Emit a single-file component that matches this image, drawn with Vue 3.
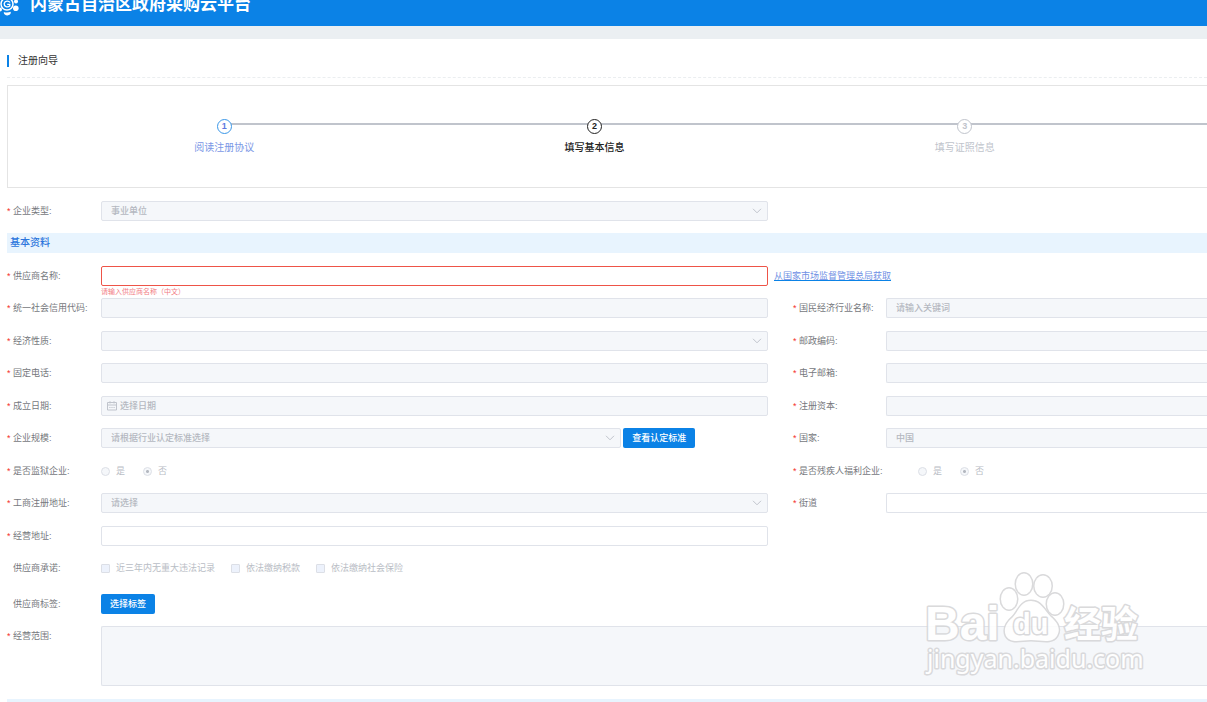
<script setup>
const steps = [
  { n: 1, title: '阅读注册协议', state: 'done' },
  { n: 2, title: '填写基本信息', state: 'current' },
  { n: 3, title: '填写证照信息', state: 'waiting' }
]

const rows = [
  { left: { id: 'credit', label: '统一社会信用代码:' }, right: { id: 'industry', label: '国民经济行业名称:', hint: '请输入关键词' } },
  { left: { id: 'nature', label: '经济性质:', kind: 'select', hint: '' }, right: { id: 'zip', label: '邮政编码:' } },
  { left: { id: 'phone', label: '固定电话:' }, right: { id: 'email', label: '电子邮箱:' } },
  { left: { id: 'founded', label: '成立日期:', kind: 'date', hint: '选择日期' }, right: { id: 'capital', label: '注册资本:' } },
  { left: { id: 'scale', label: '企业规模:', kind: 'select', hint: '请根据行业认定标准选择', button: '查看认定标准' }, right: { id: 'country', label: '国家:', hint: '中国' } },
  { left: { id: 'prison', label: '是否监狱企业:', kind: 'radio' }, right: { id: 'welfare', label: '是否残疾人福利企业:', kind: 'radio', wide: true } },
  { left: { id: 'region', label: '工商注册地址:', kind: 'select', hint: '请选择' }, right: { id: 'street', label: '街道', open: true } },
  { left: { id: 'address', label: '经营地址:', open: true } }
]

const promises = ['近三年内无重大违法记录', '依法缴纳税款', '依法缴纳社会保险']
</script>

<template>
  <div class="page">
    <header class="top">
      <svg class="logo" width="20" height="16" viewBox="0 0 20 16" fill="none" aria-hidden="true">
        <circle cx="7" cy="4" r="6" stroke="#fff" stroke-width="1.5" />
        <path d="M10 2.500C9 .5 5 .3 4.200 3.500C3.800 6.500 7.500 8 9.800 6V4.300H7.200" stroke="#fff" stroke-width="1.300" />
        <circle cx="16" cy="1.500" r="2" fill="#fff" />
        <circle cx="15.800" cy="8.300" r="2.800" fill="#fff" />
        <path d="M3.800 12C5.500 12.800 8.800 12.800 10.600 11.800C11.500 13.500 9.500 15.500 7.400 15.500C5.500 15.500 3.500 14 3.800 12Z" fill="#fff" />
        <circle cx="0" cy="9.500" r="2" fill="#fff" />
      </svg>
      <h1>内蒙古自治区政府采购云平台</h1>
    </header>
    <div class="strip"></div>

    <main>
      <h2 class="guide"><span>注册向导</span></h2>

      <ol class="steps">
        <li v-for="s in steps" :key="s.n" :class="s.state">
          <span class="num">{{ s.n }}</span>
          <span class="title">{{ s.title }}</span>
        </li>
        <li class="tail" aria-hidden="true"></li>
      </ol>

      <form @submit.prevent>
        <div class="row type">
          <div class="item">
            <label for="type"><i>*</i>企业类型:</label>
            <div class="select">
              <select id="type" disabled><option>事业单位</option></select>
              <svg width="10" height="6" viewBox="0 0 10 6"><path d="M1 .8L5 4.800L9 .8" /></svg>
            </div>
          </div>
        </div>

        <h3>基本资料</h3>

        <div class="row supplier">
          <div class="item">
            <label for="name"><i>*</i>供应商名称:</label>
            <input id="name" type="text" class="invalid" />
          </div>
          <a href="#">从国家市场监督管理总局获取</a>
        </div>
        <p class="error">请输入供应商名称（中文）</p>

        <div v-for="(r, k) in rows" :key="k" class="row line">
          <div
            v-for="(f, side) in r"
            :key="f.id"
            class="item"
            :class="[side, { wide: f.wide }]"
          >
            <label :for="f.kind === 'radio' ? f.id + '-yes' : f.id"><i>*</i>{{ f.label }}</label>
            <div v-if="f.kind === 'select'" class="combo" :class="{ paired: f.button }">
              <div class="select">
                <select :id="f.id" disabled><option>{{ f.hint }}</option></select>
                <svg width="10" height="6" viewBox="0 0 10 6"><path d="M1 .8L5 4.800L9 .8" /></svg>
              </div>
              <button v-if="f.button" type="button">{{ f.button }}</button>
            </div>
            <div v-else-if="f.kind === 'radio'" class="choices radios">
              <label><input :id="f.id + '-yes'" type="radio" :name="f.id" disabled />是</label>
              <label><input type="radio" :name="f.id" checked disabled />否</label>
            </div>
            <div v-else-if="f.kind === 'date'" class="date">
              <svg width="10" height="10" viewBox="0 0 10 10">
                <path d="M.5 1.500H9.500V9H.5ZM.5 4H9.500M3 .2V2.500M7 .2V2.500M2.300 6.500H3.500M4.400 6.500H5.600M6.500 6.500H7.700" />
              </svg>
              <input :id="f.id" type="text" :placeholder="f.hint" disabled />
            </div>
            <input v-else :id="f.id" type="text" :placeholder="f.hint" :disabled="!f.open" />
          </div>
        </div>

        <div class="item promise">
          <span class="name">供应商承诺:</span>
          <div class="choices">
            <label v-for="p in promises" :key="p"><input type="checkbox" disabled />{{ p }}</label>
          </div>
        </div>
        <div class="item tags">
          <span class="name">供应商标签:</span>
          <button type="button">选择标签</button>
        </div>
        <div class="item scope">
          <label for="scope"><i>*</i>经营范围:</label>
          <textarea id="scope" disabled></textarea>
        </div>
        <div class="next"></div>
      </form>
    </main>

    <svg class="mark" width="230" height="116" viewBox="0 0 230 116" aria-hidden="true">
      <g class="shape">
        <text x="5" y="71" class="latin">Bai</text>
        <ellipse cx="89" cy="30" rx="8" ry="10.500" />
        <ellipse cx="104" cy="15" rx="8" ry="10.500" />
        <ellipse cx="123" cy="17" rx="8.500" ry="10.500" />
        <ellipse cx="135" cy="35" rx="8" ry="10.500" />
        <path d="M111 32C121 32 124 41 131 48C138 54 141 60 137 67C132 75 121 71 111 71C101 71 91 75 86 67C83 60 86 54 93 48C99 41 101 32 111 32Z" />
        <text x="93" y="65" class="du">du</text>
        <text x="144" y="69" class="cn">经验</text>
        <text x="7" y="99" class="url">jingyan.baidu.com</text>
      </g>
    </svg>
  </div>
</template>

<style>
body {
  margin: 0;
  background: #fff;
}
</style>

<style scoped>
.page {
  position: relative;
  overflow: hidden;
  font-family: "Liberation Sans", "Noto Sans CJK SC", sans-serif;
  font-size: 9px;
  line-height: 20px;
  color: #76787d;
}
* {
  box-sizing: border-box;
}
h1, h2, h3, p, ol {
  margin: 0;
  padding: 0;
  font-weight: 400;
}
.top {
  display: flex;
  align-items: flex-start;
  gap: 10px;
  height: 26px;
  background: #0b82e6;
  color: #fff;
}
.top h1 {
  font-size: 17px;
  line-height: 10px;
  font-weight: 700;
}
.strip {
  height: 13px;
  background: #ebeff2;
}
main {
  padding: 12px 0 0 7px;
}
.guide {
  display: flex;
  align-items: center;
  height: 27px;
  padding-bottom: 7px;
  border-bottom: 1px dashed #ebeef0;
  font-size: 10px;
  color: #333;
}
.guide span {
  padding-left: 9px;
  border-left: 2px solid #0b82e6;
  line-height: 12px;
}
.steps {
  display: grid;
  grid-template-columns: 370fr 370fr 370fr 57fr;
  margin-top: 7px;
  height: 103px;
  padding: 33px 0 0 31px;
  border: 1px solid #e4e4e4;
  border-right: 0;
  list-style: none;
}
.steps li {
  position: relative;
  display: flex;
  flex-direction: column;
  align-items: center;
  color: #c0c4cc;
}
.steps li::before {
  content: "";
  position: absolute;
  top: 4px;
  left: 0;
  right: 0;
  height: 2px;
  background: #c0c4cc;
}
.steps li:first-child::before {
  left: 50%;
}
.num {
  position: relative;
  width: 15px;
  height: 15px;
  border: 1px solid;
  border-radius: 50%;
  background: #fff;
  font-size: 9px;
  font-weight: 700;
  line-height: 13px;
  text-align: center;
}
.title {
  margin-top: 4px;
  font-size: 10px;
}
.steps .done {
  color: #7b97e6;
}
.done .num {
  border-color: #3a97e8;
  color: #5c78e0;
}
.steps .current {
  color: #222;
}
.current .title {
  font-weight: 500;
}
.row {
  display: grid;
  grid-template-columns: 761fr 414fr;
  column-gap: 25px;
}
.type {
  margin: 13px 0 12px;
}
h3 {
  padding-left: 3px;
  background: #e8f4fe;
  color: #2b74dc;
  font-size: 10px;
  font-weight: 500;
}
.supplier {
  grid-template-columns: 761fr 433fr;
  column-gap: 6px;
  margin-top: 13px;
}
.supplier a {
  color: #6f8fe4;
  text-decoration-color: #0b82e6;
}
.error {
  padding-left: 94px;
  color: #f27d84;
  font-size: 7px;
  line-height: 12px;
}
.line {
  margin-bottom: 12px;
}
.line:nth-of-type(odd) {
  margin-bottom: 13px;
}
.item {
  display: grid;
  grid-template-columns: 94px minmax(0, 1fr);
  height: 20px;
  white-space: nowrap;
}
.item.right {
  grid-template-columns: 93px minmax(0, 1fr);
}
.item.wide {
  grid-template-columns: 125px minmax(0, 1fr);
}
i {
  display: inline-block;
  width: 6px;
  color: #f5322d;
  font-style: normal;
}
.name {
  padding-left: 6px;
}
input[type="text"], select, textarea {
  display: block;
  width: 100%;
  height: 20px;
  margin: 0;
  padding: 0 9px;
  border: 1px solid #e0e3ea;
  border-radius: 2px;
  outline: 0;
  background: #fff;
  color: #b4b8c0;
  font-family: inherit;
  font-size: 9px;
  font-weight: 500;
  line-height: 18px;
  opacity: 1;
  appearance: none;
}
input[type="text"]:disabled, select:disabled, textarea:disabled {
  background: #f5f7fa;
}
::placeholder {
  color: #b4b8c0;
  opacity: 1;
}
.right input[type="text"], .scope textarea {
  border-right: 0;
  border-radius: 2px 0 0 2px;
}
input[type="text"].invalid {
  border-color: #ee5448;
}
.combo {
  display: flex;
  gap: 2px;
}
.select {
  position: relative;
  flex: 1;
}
.paired .select {
  flex: 0 0 78%;
}
.select svg {
  position: absolute;
  top: 7px;
  right: 6px;
  fill: none;
  stroke: #c0c4cc;
}
.date {
  position: relative;
}
.date svg {
  position: absolute;
  top: 5px;
  left: 6px;
  fill: none;
  stroke: #c0c4cc;
}
.date input[type="text"] {
  padding-left: 18px;
}
button {
  height: 20px;
  padding: 0 9px;
  border: 0;
  border-radius: 2px;
  background: #0b82e6;
  color: #fff;
  font-family: inherit;
  font-size: 9px;
  font-weight: 500;
  line-height: 20px;
}
.choices {
  display: flex;
  gap: 16px;
  color: #b9bdc5;
}
.choices label {
  display: flex;
  align-items: center;
  gap: 6px;
}
.radios {
  gap: 18px;
}
.choices input {
  width: 9px;
  height: 9px;
  margin: 0;
  border: 1px solid #dcdfe6;
  border-radius: 1px;
  background: #edf2fc;
  appearance: none;
}
.choices input[type="radio"] {
  border-radius: 50%;
  background: #f5f7fa;
}
.choices input[type="radio"]:checked {
  background: radial-gradient(circle, #b4b8c0 0 1px, #f5f7fa 2px);
}
.tags {
  margin-top: 16px;
  justify-items: start;
}
.scope {
  height: 60px;
  margin-top: 12px;
}
.scope textarea {
  height: 60px;
  resize: none;
}
.next {
  height: 3px;
  margin-top: 13px;
  background: #e8f4fe;
}
.mark {
  position: absolute;
  right: 57px;
  bottom: 17px;
  pointer-events: none;
}
.shape {
  fill: #fff;
  stroke: #d6d6d8;
  stroke-width: 3;
  stroke-linejoin: round;
  paint-order: stroke;
  opacity: 0.9;
}
.latin {
  font: 700 48px "Liberation Sans", sans-serif;
}
.du {
  font: 700 29px "Liberation Sans", sans-serif;
}
.cn {
  font: 700 37px "Noto Sans CJK SC", sans-serif;
}
.url {
  font: 400 25px "Noto Sans", sans-serif;
}
</style>
